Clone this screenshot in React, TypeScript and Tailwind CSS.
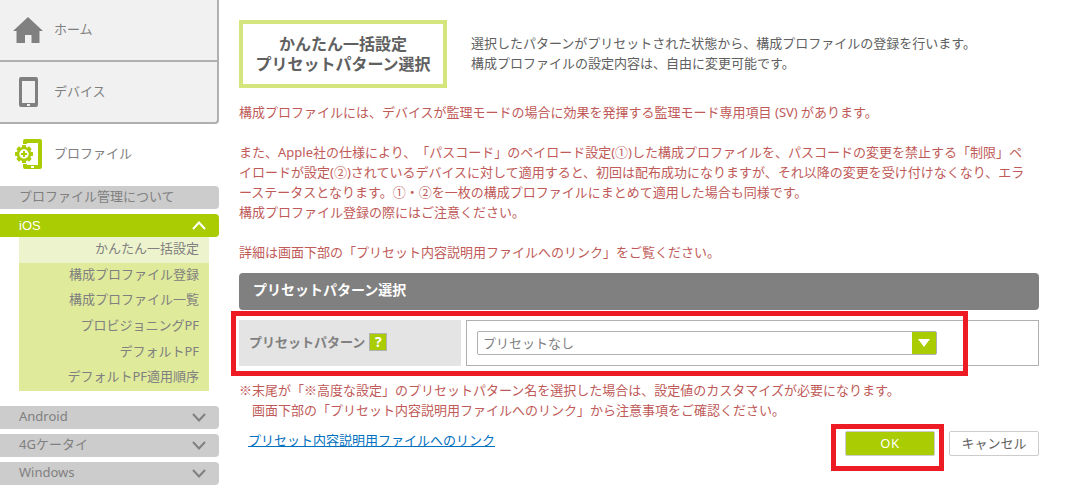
import React from 'react';

const subItems = [
  'かんたん一括設定',
  '構成プロファイル登録',
  '構成プロファイル一覧',
  'プロビジョニングPF',
  'デフォルトPF',
  'デフォルトPF適用順序',
];

const platforms = ['Android', '4Gケータイ', 'Windows'];

const gearTeeth = [0, 45, 90, 135, 180, 225, 270, 315];

const HomeIcon = () => (
  <svg width="30" height="26" viewBox="0 0 30 26" fill="#808080" aria-hidden="true">
    <path d="M15 0L30 14H26.500V26H18.500V18H12V26H3.500V14H0Z" />
  </svg>
);

const DeviceIcon = () => (
  <svg width="19" height="30" viewBox="0 0 19 30" aria-hidden="true">
    <path
      fillRule="evenodd"
      fill="#808080"
      d="M2 0H17Q19 0 19 2V28Q19 30 17 30H2Q0 30 0 28V2Q0 0 2 0ZM3 4V26H16V4Z"
    />
    <rect x="8" y="27" width="3" height="2" fill="#f1f1f1" />
  </svg>
);

const ProfileIcon = () => (
  <svg width="27" height="30" viewBox="0 0 27 30" aria-hidden="true">
    <path
      fill="#aacc03"
      d="M10 0H25Q27 0 27 2V28Q27 30 25 30H10Q8 30 8 28V25H12V26H23V4H12V5H8V2Q8 0 10 0Z"
    />
    <rect x="16" y="27" width="3" height="2" fill="#fff" />
    <g fill="#aacc03">
      {gearTeeth.map((angle) => (
        <rect key={angle} x="7" y="6" width="4" height="4" rx="0.500" transform={`rotate(${angle} 9 15)`} />
      ))}
    </g>
    <circle cx="9" cy="15" r="6" fill="#fff" stroke="#aacc03" strokeWidth="2.500" />
    <path d="M9 12V18M6 15H12" stroke="#aacc03" strokeWidth="2" />
  </svg>
);

const Chevron = ({ up = false }: { up?: boolean }) => (
  <svg width="14" height="9" viewBox="0 0 14 9" fill="none" strokeWidth="2" stroke={up ? '#fff' : '#808080'} aria-hidden="true">
    <path d={up ? 'M1 8L7 1.500L13 8' : 'M1 1L7 7.500L13 1'} />
  </svg>
);

const Sidebar: React.FC = () => (
  <nav className="w-[219px] shrink-0 text-[#808080]">
    <div className="overflow-hidden rounded-br border-r-2 border-b-2 border-[#b0b0b0] bg-[#f1f1f1]">
      <a href="#home" className="flex h-[62px] items-center border-b-2 border-[#b0b0b0]">
        <span className="flex w-[54px] justify-center pr-0.5 pl-1"><HomeIcon /></span>
        <span className="pb-0.5">ホーム</span>
      </a>
      <a href="#device" className="flex h-[60px] items-center">
        <span className="flex w-[54px] justify-center pl-0.5"><DeviceIcon /></span>
        <span className="pb-0.5">デバイス</span>
      </a>
    </div>
    <a href="#profile" className="mb-0.5 flex h-[60px] items-center">
      <span className="flex w-[54px] justify-center pl-0.5"><ProfileIcon /></span>
      <span className="pb-0.5">プロファイル</span>
    </a>

    <a href="#about" className="block h-[23px] rounded-r bg-[#cccccc] pl-[19px] leading-[21px]">
      プロファイル管理について
    </a>
    <button className="mt-[5px] flex h-[23px] w-full items-center justify-between rounded-r bg-[#aacc03] pr-[13px] pl-[19px] font-['Liberation_Sans',sans-serif] text-white">
      iOS
      <Chevron up />
    </button>
    <ul className="mr-2.5 ml-[19px] grid h-[154px] grid-rows-6 bg-[#dfea9b] text-right">
      {subItems.map((item, i) => (
        <li key={item} className={i === 0 ? 'bg-[#edf4cd]' : ''}>
          <a href="#ios" className="block pr-2.5 leading-[22px]">{item}</a>
        </li>
      ))}
    </ul>
    <div className="mt-[15px] flex flex-col gap-[5px]">
      {platforms.map((name) => (
        <button key={name} className="flex h-[23px] w-full items-center justify-between rounded-r bg-[#cccccc] pr-[13px] pl-[19px]">
          <span className="pb-[3px]">{name}</span>
          <Chevron />
        </button>
      ))}
    </div>
  </nav>
);

const App: React.FC = () => {
  return (
    <div className="flex bg-white font-['Noto_Sans','Noto_Sans_CJK_JP',sans-serif] text-[13px] leading-5 [text-spacing-trim:space-all]">
      <Sidebar />

      <main className="min-w-0 flex-1 pt-5 pr-8 pl-5 text-[#c05a58]">
        {/* Title */}
        <div className="flex items-center gap-6 text-[#606060]">
          <h1 className="h-[68px] w-[208px] shrink-0 border-4 border-[#d5e57e] pt-2.5 text-center text-base leading-5 font-bold">
            かんたん一括設定
            <br />
            プリセットパターン選択
          </h1>
          <p className="pb-0.5">
            選択したパターンがプリセットされた状態から、構成プロファイルの登録を行います。
            <br />
            構成プロファイルの設定内容は、自由に変更可能です。
          </p>
        </div>

        {/* Notes */}
        <div className="mt-3.5 flex flex-col gap-5">
          <p>構成プロファイルには、デバイスが監理モードの場合に効果を発揮する監理モード専用項目 (SV) があります。</p>
          <p>
            また、Apple社の仕様により、「パスコード」のペイロード設定(①)した構成プロファイルを、パスコードの変更を禁止する「制限」ペ
            <br />
            イロードが設定(②)されているデバイスに対して適用すると、初回は配布成功になりますが、それ以降の変更を受け付けなくなり、エラ
            <br />
            ーステータスとなります。①・②を一枚の構成プロファイルにまとめて適用した場合も同様です。
            <br />
            構成プロファイル登録の際にはご注意ください。
          </p>
          <p>詳細は画面下部の「プリセット内容説明用ファイルへのリンク」をご覧ください。</p>
        </div>

        {/* Preset pattern */}
        <h2 className="mt-[11px] h-[37px] rounded bg-[#808080] pl-3.5 text-sm leading-[34px] font-bold text-white">
          プリセットパターン選択
        </h2>
        <div className="relative mt-2.5 flex h-[46px] gap-[5px] text-[#808080]">
          <div className="flex w-[222px] shrink-0 items-center gap-1 bg-[#e4e4e4] pb-0.5 pl-2.5">
            <label htmlFor="preset" className="font-bold">プリセットパターン</label>
            <button aria-label="ヘルプ" className="h-[18px] w-[18px] border border-[#b0b0b0] bg-[#aacc03] text-sm leading-4 font-bold text-white">
              ?
            </button>
          </div>
          <div className="flex flex-1 items-center border border-[#b0b0b0] pl-2.5">
            <div className="relative w-[460px]">
              <select id="preset" className="block h-6 w-full appearance-none rounded-xs border border-[#b0b0b0] bg-white pr-7 pl-[5px]">
                <option>プリセットなし</option>
              </select>
              <span className="pointer-events-none absolute top-px right-px flex h-[22px] w-6 items-center justify-center bg-[#aacc03]">
                <svg width="12" height="8" viewBox="0 0 12 8" fill="#fff" aria-hidden="true"><path d="M0 0H12L6 8Z" /></svg>
              </span>
            </div>
          </div>
          <div className="pointer-events-none absolute -top-[9px] -left-2 h-[65px] w-[737px] border-5 border-[#ed1c24]" />
        </div>

        <p className="mt-3.5 pl-[13px] -indent-[13px] font-['Noto_Sans_CJK_JP',sans-serif]">
          ※末尾が「※高度な設定」のプリセットパターン名を選択した場合は、設定値のカスタマイズが必要になります。
        </p>
        <p className="pl-[13px]">
          画面下部の「プリセット内容説明用ファイルへのリンク」から注意事項をご確認ください。
        </p>

        {/* Footer */}
        <div className="mt-2.5 flex items-start justify-between pl-[9px]">
          <a href="#files" className="text-[#0070c0] underline">プリセット内容説明用ファイルへのリンク</a>
          <div className="mt-px flex gap-3.5">
            <div className="relative">
              <button className="block h-[25px] w-[90px] rounded-xs border border-[#cccccc] bg-[#aacc03] pb-0.5 tracking-wider text-white">OK</button>
              <div className="pointer-events-none absolute -top-[7px] -left-3.5 h-[47px] w-[113px] border-5 border-[#ed1c24]" />
            </div>
            <button className="block h-[25px] w-[90px] rounded-xs border border-[#cccccc] bg-white pb-0.5 text-[#606060]">キャンセル</button>
          </div>
        </div>
      </main>
    </div>
  );
};

export default App;
